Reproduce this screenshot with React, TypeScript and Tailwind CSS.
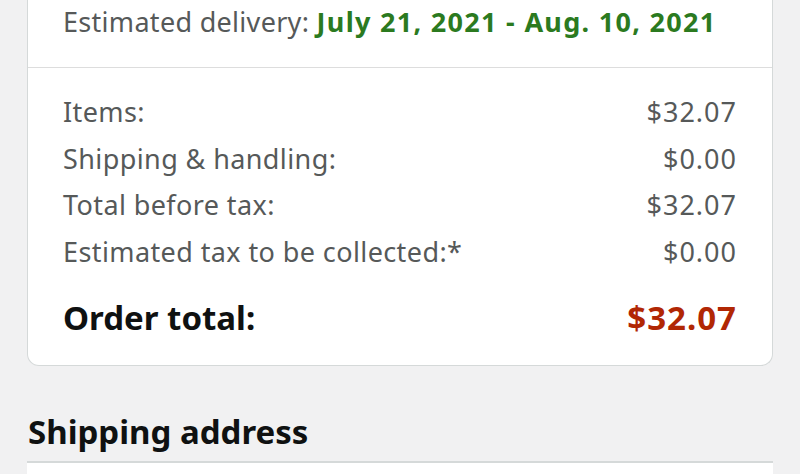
const rows = [
  { label: 'Items:', value: '$32.07' },
  { label: 'Shipping & handling:', value: '$0.00' },
  { label: 'Total before tax:', value: '$32.07' },
  { label: 'Estimated tax to be collected:*', value: '$0.00' },
];

export default function App() {
  return (
    <div className="min-h-[474px] h-[474px] overflow-hidden bg-[#f1f1f2] font-['Noto_Sans',sans-serif]">
      {/* Order summary card */}
      <div className="mx-[27px] bg-white border-x border-b border-[#d5d9d9] rounded-b-[12px]">
        <div className="h-[67px] pt-[4px] px-[35px] text-[27px] leading-[36px] text-[#565959] tracking-[0.3px]">
          Estimated delivery:{' '}
          <span className="font-bold text-[#2b7a1f] tracking-[1.3px]">July 21, 2021 - Aug. 10, 2021</span>
        </div>
        <div className="border-t border-[#dddddd] px-[35px] pt-[21px] pb-[23px]">
          {rows.map((r) => (
            <div key={r.label} className="flex justify-between text-[27px] leading-[46.5px] text-[#565959]">
              <span className="tracking-[0.4px]">{r.label}</span>
              <span className="tracking-[1px]">{r.value}</span>
            </div>
          ))}
          <div className="flex justify-between mt-[19px] text-[33px] leading-[48px] font-bold">
            <span className="text-[#0f1111]">Order total:</span>
            <span className="text-[#b12704] tracking-[1px]">$32.07</span>
          </div>
        </div>
      </div>

      {/* Shipping address */}
      <h2 className="mt-[42px] mx-[28px] text-[33px] leading-[48px] font-bold text-[#0f1111]">Shipping address</h2>
      <div className="mt-[5px] mx-[27px] h-[40px] bg-white border-t-2 border-[#d5d9d9]" />
    </div>
  );
}
